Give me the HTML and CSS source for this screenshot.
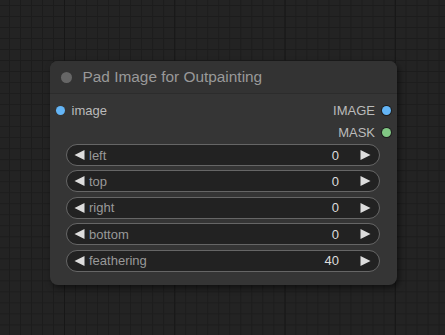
FILE: index.html
```html
<!DOCTYPE html>
<html lang="en">
<head>
    <meta charset="UTF-8">
    <meta name="viewport" content="width=device-width, initial-scale=1.0">
    <title>Pad Image for Outpainting</title>
    <link rel="stylesheet" href="styles.css">
</head>
<body>
    <div class="node">
        <div class="node-title">
            <span class="title-dot"></span>
            <span class="title-text">Pad Image for Outpainting</span>
        </div>

        <div class="slots">
            <div class="slot-row">
                <div class="slot-in">
                    <span class="dot image"></span>
                    <span>image</span>
                </div>
                <div class="slot-out">
                    <span>IMAGE</span>
                    <span class="dot image out"></span>
                </div>
            </div>
            <div class="slot-row">
                <div></div>
                <div class="slot-out">
                    <span>MASK</span>
                    <span class="dot mask out"></span>
                </div>
            </div>
        </div>

        <div class="widgets">
            <div class="widget">
                <svg class="arrow" viewBox="0 0 11 11"><polygon points="0,5.5 11,0 11,11"/></svg>
                <span class="label">left</span>
                <span class="value">0</span>
                <svg class="arrow" viewBox="0 0 11 11"><polygon points="11,5.5 0,0 0,11"/></svg>
            </div>
            <div class="widget">
                <svg class="arrow" viewBox="0 0 11 11"><polygon points="0,5.5 11,0 11,11"/></svg>
                <span class="label">top</span>
                <span class="value">0</span>
                <svg class="arrow" viewBox="0 0 11 11"><polygon points="11,5.5 0,0 0,11"/></svg>
            </div>
            <div class="widget">
                <svg class="arrow" viewBox="0 0 11 11"><polygon points="0,5.5 11,0 11,11"/></svg>
                <span class="label">right</span>
                <span class="value">0</span>
                <svg class="arrow" viewBox="0 0 11 11"><polygon points="11,5.5 0,0 0,11"/></svg>
            </div>
            <div class="widget">
                <svg class="arrow" viewBox="0 0 11 11"><polygon points="0,5.5 11,0 11,11"/></svg>
                <span class="label">bottom</span>
                <span class="value">0</span>
                <svg class="arrow" viewBox="0 0 11 11"><polygon points="11,5.5 0,0 0,11"/></svg>
            </div>
            <div class="widget">
                <svg class="arrow" viewBox="0 0 11 11"><polygon points="0,5.5 11,0 11,11"/></svg>
                <span class="label">feathering</span>
                <span class="value">40</span>
                <svg class="arrow" viewBox="0 0 11 11"><polygon points="11,5.5 0,0 0,11"/></svg>
            </div>
        </div>
    </div>
</body>
</html>
```

FILE: styles.css
```css
:root {
    --node-bg: #353535;
    --title-bg: #333;
    --widget-bg: #222;
    --widget-outline: #666;
    --text: #ddd;
    --text-dim: #999;
    --image: #64b5f6;
    --mask: #81c784;
}

* {
    margin: 0;
    padding: 0;
    box-sizing: border-box;
    font-family: "Liberation Sans", Arial, sans-serif;
}

body {
    width: 445px;
    height: 335px;
    overflow: hidden;
    padding: 61px 0 0 50px;
    background-color: #232323;
    background-image:
        linear-gradient(90deg, #171717 1px, transparent 1px),
        linear-gradient(90deg, #1c1c1c 1px, transparent 1px),
        linear-gradient(#1c1c1c 1px, transparent 1px);
    background-size: 110.3px 100%, 11.03px 100%, 100% 11.03px;
    background-position: 64px 0, 9px 0, 0 5px;
}

.node {
    width: 347px;
    height: 224px;
    background: var(--node-bg);
    border-radius: 8px;
    box-shadow: 2px 3px 6px rgba(0, 0, 0, 0.55);
    overflow: hidden;
}

.node-title {
    height: 33px;
    display: flex;
    align-items: center;
    gap: 11px;
    padding-left: 10.5px;
    background: var(--title-bg);
    border-bottom: 1px solid #2c2c2c;
}

.title-dot {
    width: 11px;
    height: 11px;
    border-radius: 50%;
    background: #666;
}

.title-text {
    color: var(--text-dim);
    font-size: 15.4px;
}

.slots {
    padding: 5px 6px 0 6px;
}

.slot-row {
    height: 22px;
    display: flex;
    justify-content: space-between;
    align-items: center;
    font-size: 13px;
    color: #bbb;
}

.slot-in,
.slot-out {
    display: flex;
    align-items: center;
}

.slot-in {
    gap: 6.5px;
}

.slot-out {
    gap: 7px;
}

.dot {
    width: 9px;
    height: 9px;
    border-radius: 50%;
}

.dot.image {
    background: var(--image);
}

.dot.mask {
    background: var(--mask);
}

.dot.out {
    box-shadow: 0 0 0 1px #1e1e1e;
}

.widgets {
    display: flex;
    flex-direction: column;
    gap: 4.4px;
    margin-top: 1px;
    padding: 0 17px 0 16px;
}

.widget {
    height: 22px;
    display: flex;
    align-items: center;
    padding: 0 8px 0 7px;
    background: var(--widget-bg);
    border: 1px solid var(--widget-outline);
    border-radius: 11px;
    font-size: 13px;
}

.arrow {
    width: 11px;
    height: 10px;
    fill: var(--text);
}

.label {
    flex: 1;
    margin-left: 4px;
    color: var(--text-dim);
}

.value {
    margin-right: 21px;
    color: var(--text);
}
```
